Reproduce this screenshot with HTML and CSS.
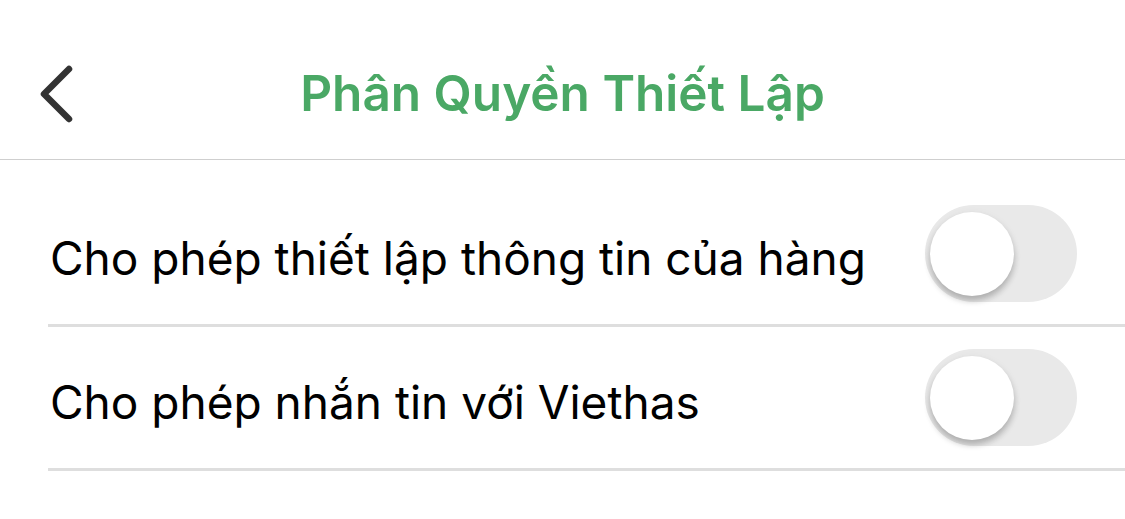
FILE: index.html
```html
<!DOCTYPE html>
<html lang="vi">
<head>
<meta charset="utf-8">
<link rel="stylesheet" href="styles.css">
</head>
<body>
<header class="header">
  <button class="back" aria-label="Back">
    <svg width="40" height="62" viewBox="0 0 40 62"><path d="M33 6 L8 31 L33 56" fill="none" stroke="#333" stroke-width="6.5" stroke-linecap="round" stroke-linejoin="round"/></svg>
  </button>
  <h1 class="title">Phân Quyền Thiết Lập</h1>
</header>
<main class="list">
  <div class="row">
    <span class="label">Cho phép thiết lập thông tin của hàng</span>
    <span class="toggle"><span class="knob"></span></span>
  </div>
  <div class="row">
    <span class="label">Cho phép nhắn tin với Viethas</span>
    <span class="toggle"><span class="knob"></span></span>
  </div>
</main>
</body>
</html>
```
FILE: styles.css
```css
* { box-sizing: border-box; }
html, body { margin: 0; padding: 0; background: #fff; }
body { font-family: Inter, "Noto Sans", sans-serif; width: 1125px; }
.header {
  height: 160px;
  border-bottom: 1px solid #cfcfcf;
  display: flex;
  align-items: center;
  justify-content: center;
  position: relative;
}
.back {
  position: absolute;
  left: 36px;
  top: 63px;
  border: 0;
  background: none;
  padding: 0;
  display: flex;
}
.title {
  margin: 0;
  font-size: 49.5px;
  font-weight: 600;
  color: #4aa865;
  letter-spacing: 0;
  transform: translateY(13px);
}
.list { padding-top: 23px; padding-left: 48px; }
.row {
  height: 144px;
  border-bottom: 3px solid #dedede;
  display: flex;
  align-items: center;
  justify-content: space-between;
  padding-left: 2px;
  padding-right: 48px;
}
.label {
  font-size: 46px;
  color: #000;
  font-weight: 400;
  padding-top: 8px;
}
.toggle {
  width: 152px;
  height: 97px;
  border-radius: 49px;
  background: #e9e9e9;
  position: relative;
  display: block;
}
.knob {
  position: absolute;
  left: 5px;
  top: 7px;
  width: 84px;
  height: 84px;
  border-radius: 50%;
  background: #fff;
  box-shadow: 0 5px 6px rgba(0,0,0,0.22), 0 2px 10px rgba(0,0,0,0.06);
}
```
